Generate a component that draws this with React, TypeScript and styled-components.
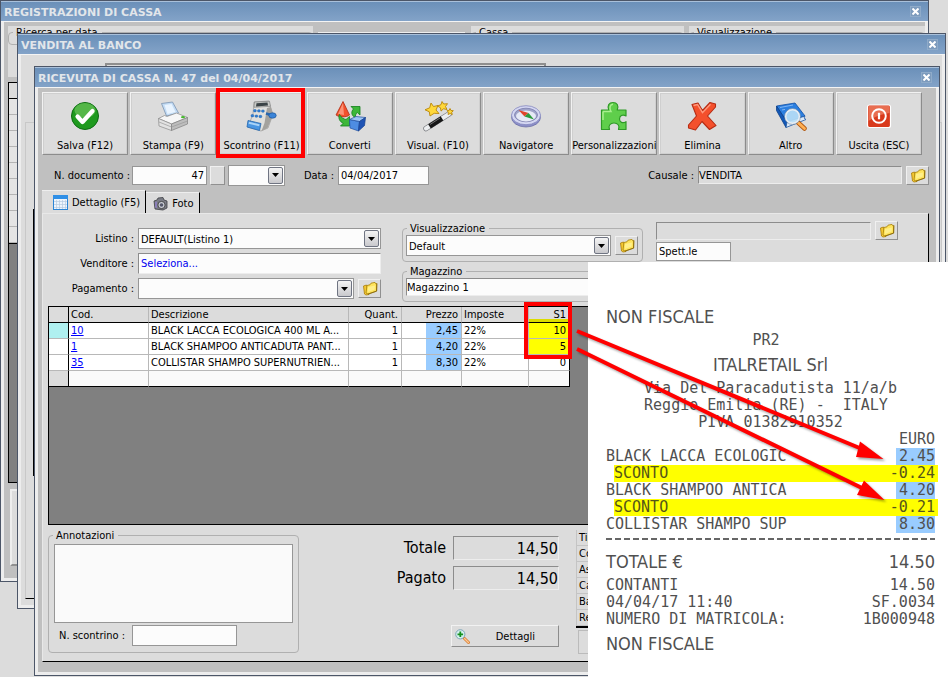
import React from "react";
import styled, { createGlobalStyle, css } from "styled-components";

const face = "#dcdcdc";
const shade = "#c0c0c0";
const ui = `"DejaVu Sans Condensed", Tahoma, "Noto Sans", sans-serif`;
const mono = `"DejaVu Sans Mono", "Liberation Mono", monospace`;

const Global = createGlobalStyle`
  *, *::before, *::after { box-sizing: border-box; }
  body { margin: 0; background: ${face}; font: 11px/13px ${ui}; color: #000; }
  button, input, select, textarea { font: inherit; color: inherit; margin: 0; border-radius: 0; outline: none; }
`;

const Desktop = styled.div`
  position: relative;
  height: 100vh;
  overflow: hidden;
`;

const Window = styled.section<{ $l: number; $t: number; $r: number; $b: number }>`
  position: absolute;
  left: ${(p) => p.$l}px;
  top: ${(p) => p.$t}px;
  right: ${(p) => p.$r}px;
  bottom: ${(p) => p.$b}px;
  display: flex;
  flex-direction: column;
  border: 1px solid #4c5668;
`;

const TitleBar = styled.header`
  display: flex;
  align-items: center;
  justify-content: space-between;
  flex: none;
  height: 21px;
  padding: 0 7px 0 3px;
  background: linear-gradient(#6b90b9, #83a3c8);
  border-top: 1px solid #a9c0da;
  border-bottom: 1px solid #f4f4f4;
`;

const Title = styled.h1`
  margin: 0;
  padding-top: 3px;
  font-family: "DejaVu Sans", Verdana, sans-serif;
  font-size: 11px;
  line-height: 16px;
  font-weight: bold;
  color: #e2e6ea;
  white-space: nowrap;
`;

const Close = styled.button`
  display: flex;
  align-items: center;
  justify-content: center;
  width: 11px;
  height: 11px;
  padding: 0;
  background: #7d9bbd;
  border: 1px solid #8fabc9;
`;

const Body = styled.div<{ $bg: string }>`
  flex: 1;
  min-height: 0;
  display: flex;
  flex-direction: column;
  background: ${(p) => p.$bg};
  border: 3px solid #ededed;
  border-top: 0;
  overflow: hidden;
`;

/* ---- back windows ---- */
const FilterRow = styled.div`
  display: grid;
  grid-template-columns: 305px 148px 213px 1fr;
  gap: 5px;
  padding: 4px 0 0 4px;
`;

const FilterPanel = styled.div`
  height: 51px;
  background: ${face};
`;

const BlankButton = styled.button`
  height: 44px;
  margin-top: 6px;
  background: ${face};
  border: 1px solid #eee;
  border-right-color: #909090;
  border-bottom-color: #909090;
`;

const BackGrid = styled.div`
  flex: 1;
  margin: 5px 0 6px 4px;
  border: 1px solid #000;
  background: #808080;
`;

const BackHead = styled.div`
  height: 16px;
  background: ${face};
  border-bottom: 1px solid #000;
`;

const BackRows = styled.div`
  height: 145px;
  border-bottom: 1px solid #000;
  background: repeating-linear-gradient(#e4e4e4 0 15px, #b4b4b4 15px 16px);
`;

const BackFooter = styled.div`
  height: 77px;
  margin: 0 4px 12px 6px;
  background: ${face};
  border: 2px solid #eee;
  border-bottom-color: #909090;
`;

const BackField = styled.div`
  width: 441px;
  height: 30px;
  margin: 8px 0 0 84px;
  border: 2px solid #8e8e8e;
`;

const BackPanel = styled.div`
  flex: 1;
  margin: 29px 0 6px 4px;
  padding: 86px 1px 122px 7px;
  border: 1px solid #c8c8c8;
  border-bottom-color: #000;
`;

const BackInner = styled.div`
  height: 100%;
  border: 1px solid #000;
`;

/* ---- toolbar ---- */
const Main = styled(Body)`
  padding: 4px 7px 10px 4px;
`;

const Toolbar = styled.nav`
  display: grid;
  grid-template-columns: repeat(10, 1fr);
  gap: 2px;
  flex: none;
  padding-right: 7px;
`;

const Tool = styled.button<{ $marked?: boolean }>`
  position: relative;
  display: flex;
  flex-direction: column;
  align-items: center;
  min-width: 0;
  height: 63px;
  padding: 7px 0 0;
  background: ${face};
  border: 1px solid;
  border-color: #f2f2f2 #8c8c8c #8c8c8c #f2f2f2;
  box-shadow: inset 1px 1px #cfcfcf, inset -1px -1px #cfcfcf;
  white-space: nowrap;
  ${(p) =>
    p.$marked &&
    css`
      &::after {
        content: "";
        position: absolute;
        inset: -5px -1px -4px -3px;
        border: 4px solid #f00;
      }
    `}
  svg { flex: none; width: 32px; height: 32px; }
`;

const ToolLabel = styled.span`
  display: flex;
  justify-content: center;
  width: 100%;
  margin-top: 7px;
  overflow: hidden;
`;

/* ---- form parts ---- */
const DocRow = styled.div`
  display: flex;
  align-items: center;
  flex: none;
  margin-top: 10px;
  padding-left: 12px;
  height: 20px;
`;

const Label = styled.label<{ $w: number; $right?: boolean }>`
  flex: none;
  width: ${(p) => p.$w}px;
  padding-right: 4px;
  text-align: ${(p) => (p.$right ? "right" : "left")};
  white-space: nowrap;
`;

const Field = styled.input<{ $w?: number; $sunken?: boolean; $right?: boolean }>`
  ${(p) => (p.$w ? `width: ${p.$w}px; flex: none;` : "flex: 1; min-width: 0; width: 100%;")}
  height: ${(p) => (p.$sunken ? 18 : 19)}px;
  padding: 0 2px;
  background: ${(p) => (p.$sunken ? face : "#fcfcfc")};
  border: 1px solid #969696;
  text-align: ${(p) => (p.$right ? "right" : "left")};
  ${(p) => p.$sunken && "border-color: #8c8c8c #ededed #ededed #8c8c8c; padding: 0;"}
`;

const SellerField = styled(Field)`
  height: 21px;
  border-color: #8c8c8c #ededed #ededed #8c8c8c;
  color: #0000f0;
`;

const StoreField = styled(Field)`
  height: 18px;
  padding: 0;
  border-color: #8c8c8c #ededed #ededed #8c8c8c;
`;

const SlipField = styled(Field)`
  height: 21px;
`;

const SmallButton = styled.button`
  flex: none;
  width: 15px;
  height: 19px;
  margin: 0 3px;
  padding: 0;
  background: ${face};
  border: 1px solid;
  border-color: #f0f0f0 #909090 #909090 #f0f0f0;
`;

const FolderButton = styled(SmallButton)`
  display: flex;
  align-items: center;
  justify-content: center;
  width: 23px;
  margin: 0 0 0 4px;
`;

const SelectWrap = styled.span<{ $w?: number }>`
  position: relative;
  display: flex;
  ${(p) => (p.$w ? `width: ${p.$w}px; flex: none;` : "flex: 1; min-width: 0;")}
`;

const NativeSelect = styled.select`
  appearance: none;
  width: 100%;
  height: 21px;
  padding: 1px 18px 0 2px;
  background: #fcfcfc;
  border: 1px solid #969696;
`;

const Arrow = styled.span`
  position: absolute;
  right: 2px;
  top: 2px;
  bottom: 2px;
  display: flex;
  align-items: center;
  justify-content: center;
  width: 15px;
  border: 1px solid #6f7482;
  border-radius: 2px;
  background: linear-gradient(#f4f4f4, #c9c9cd);
  pointer-events: none;
`;

const Tabs = styled.div`
  display: flex;
  align-items: flex-end;
  flex: none;
  height: 23px;
  margin-top: 5px;
`;

const Tab = styled.button<{ $on?: boolean }>`
  display: flex;
  align-items: center;
  gap: 4px;
  height: ${(p) => (p.$on ? 23 : 21)}px;
  padding: 1px 5px 0 ${(p) => (p.$on ? 11 : 7)}px;
  background: ${face};
  border: 0;
  border-top: 1px solid #eee;
  border-right: 1px solid #000;
`;

const Panel = styled.div`
  flex: 1;
  min-height: 0;
  display: flex;
  flex-direction: column;
  padding: 0 5px;
  background: ${face};
  border: 1px solid #e8e8e8;
  border-right-color: #000;
  border-bottom-color: #000;
`;

const FormArea = styled.div`
  display: grid;
  grid-template-columns: 333px 241px 1fr;
  gap: 0 21px;
  flex: none;
  height: 92px;
  padding-top: 7px;
`;

const LeftColumn = styled.div`
  display: flex;
  flex-direction: column;
  gap: 4px;
  padding-top: 7px;
`;

const Line = styled.div`
  display: flex;
  align-items: center;
`;

const MidColumn = styled.div`
  display: flex;
  flex-direction: column;
  gap: 3px;
  padding-top: 1px;
`;

const RightColumn = styled.div`
  display: flex;
  flex-direction: column;
  gap: 2px;
  margin-left: -8px;
  padding-right: 25px;
`;

const Group = styled.fieldset`
  min-width: 0;
  margin: 0;
  padding: 0 4px 5px 3px;
  border: 1px solid #b0b0b0;
  border-radius: 4px;
`;

const Legend = styled.legend`
  margin-left: 1px;
  padding: 0 4px 0 3px;
  line-height: 13px;
`;

/* ---- article grid ---- */
const GridArea = styled.div`
  flex: 1;
  min-height: 0;
  border: 1px solid #000;
  background: #808080;
`;

const Table = styled.table`
  width: 521px;
  table-layout: fixed;
  border-collapse: separate;
  border-spacing: 0;
  tr:last-child td { border-bottom-color: #000; background: #fafafa; }
  tr:last-child td:first-child { background: ${face}; }
`;

const cell = css<{ $right?: boolean; $edge?: boolean }>`
  height: 16px;
  padding: 1px 3px 0 2px;
  line-height: 14px;
  font-weight: normal;
  text-align: ${(p) => (p.$right ? "right" : "left")};
  white-space: nowrap;
  overflow: hidden;
  text-overflow: ellipsis;
  border-right: 1px solid ${(p) => (p.$edge ? "#000" : "#b8b8b8")};
`;

const Th = styled.th<{ $right?: boolean; $edge?: boolean }>`
  ${cell}
  background: ${face};
  border-bottom: 1px solid #000;
`;

const MarkedTh = styled(Th)`
  position: relative;
  overflow: visible;
  background: linear-gradient(${face} 12px, #dcdc00 12px);
  &::after {
    content: "";
    position: absolute;
    left: -5px;
    top: -5px;
    right: -3px;
    height: 57px;
    border: 4px solid #f00;
  }
`;

const tones = {
  plain: "#fff",
  current: "#aff0f0",
  price: "linear-gradient(to right, #fff 24px, #99ccff 24px)",
  discount: "#ff0",
};

const Td = styled.td<{ $right?: boolean; $edge?: boolean; $tone?: keyof typeof tones }>`
  ${cell}
  background: ${(p) => tones[p.$tone ?? "plain"]};
  border-bottom: 1px solid #b8b8b8;
  a { color: #00f; }
`;

/* ---- bottom area ---- */
const Bottom = styled.div`
  display: flex;
  flex: none;
  height: 136px;
  padding: 4px 0 8px;
`;

const NotesGroup = styled(Group)`
  width: 251px;
  padding: 2px 5px 7px;
`;

const NotesLegend = styled(Legend)`
  margin-left: -1px;
`;

const Notes = styled.textarea`
  display: block;
  width: 100%;
  height: 79px;
  resize: none;
  background: #fafafa;
  border: 1px solid #969696;
`;

const NoteLine = styled(Line)`
  margin-top: 2px;
  padding-left: 5px;
`;

const Totals = styled.div`
  display: flex;
  flex-direction: column;
  gap: 6px;
  width: 260px;
  padding-top: 7px;
`;

const TotalLabel = styled.label`
  width: 147px;
  margin-right: 7px;
  text-align: right;
  font-size: 16px;
  line-height: 24px;
`;

const TotalField = styled(Field)`
  height: 24px;
  font-size: 16px;
`;

const DetailsButton = styled.button`
  display: flex;
  align-items: center;
  width: 108px;
  height: 22px;
  margin: 29px 0 0 152px;
  padding: 0 23px 0 3px;
  background: ${face};
  border: 1px solid;
  border-color: #f2f2f2 #8c8c8c #8c8c8c #f2f2f2;
  span { flex: 1; text-align: right; }
`;

const Payments = styled.div`
  flex: 1;
  margin-left: 17px;
  padding-top: 1px;
`;

const PaymentList = styled.ul`
  margin: 0;
  padding: 0;
  list-style: none;
  border-bottom: 2px solid #000;
  li { height: 16px; padding-left: 2px; line-height: 15px; border-bottom: 1px solid #c4c4c4; border-left: 1px solid #c4c4c4; }
`;

const PaymentBox = styled.div`
  height: 24px;
  margin: 2px 0 0 2px;
  border: 1px solid #bbb;
`;

/* ---- receipt ---- */
const Receipt = styled.article`
  position: absolute;
  left: 588px;
  top: 262px;
  right: 0;
  bottom: 0;
  padding: 39px 13px 0 18px;
  background: #fff;
  color: #505050;
  font-family: ${mono};
  font-size: 15px;
  line-height: 17px;
  white-space: pre;
`;

const Slip = styled.div`
  display: flex;
  justify-content: space-between;
`;

const Centered = styled(Slip)`
  justify-content: center;
`;

const Tall = styled(Slip)`
  font-family: ${ui};
  font-size: 18px;
  line-height: 31px;
`;

const TallCentered = styled(Tall)`
  justify-content: center;
`;

const Discount = styled(Slip)`
  margin: 0 -3px 0 8px;
  padding-right: 3px;
  background: #ff0;
  color: #55551a;
`;

const Amount = styled.span`
  padding-left: 3px;
  background: #99ccff;
`;

const Rule = styled.hr`
  height: 2px;
  margin: 5px 0 6px;
  border: 0;
  background: repeating-linear-gradient(to right, #666 0 6px, transparent 6px 9px);
`;

const Arrows = styled.svg`
  position: absolute;
  left: 570px;
  top: 320px;
  width: 330px;
  height: 200px;
  pointer-events: none;
  filter: drop-shadow(2px 2px 1px rgba(0, 0, 0, 0.35));
`;

const CloseX = () => (
  <svg width="7" height="7" viewBox="0 0 7 7"><path d="M.5.5l6 6M6.5.5l-6 6" stroke="#fff" strokeWidth="2" /></svg>
);

const Folder = () => (
  <svg width="16" height="15" viewBox="0 0 16 15">
    <path d="M1.500 5l3-1 1 7 1.500 2.500-3 .5-1.500-1z" fill="#f5c832" stroke="#a87c08" strokeWidth=".8" />
    <path d="M5 4.500l3-.7 1-1.600 4-.8.600 1.300 1.200-.2-.2 7.500-8.600 3L4 12z" fill="#ffe45c" stroke="#b08a10" strokeWidth=".9" />
    <path d="M6 6l7-1.500-.3 4L6 11z" fill="#fff3a0" opacity=".7" />
    <path d="M14.800 2.500l-.2 7.700-8.600 3" fill="none" stroke="#7a5a00" strokeWidth=".7" />
  </svg>
);

const Drop = ({ id, value, w, label }: { id?: string; value?: string; w?: number; label?: string }) => (
  <SelectWrap $w={w}>
    <NativeSelect id={id} aria-label={label}><option>{value ?? ""}</option></NativeSelect>
    <Arrow><svg width="7" height="4" viewBox="0 0 7 4"><path d="M0 0h7L3.500 4z" fill="#000" /></svg></Arrow>
  </SelectWrap>
);

const icons: Record<string, React.ReactNode> = {
  save: (
    <>
      <circle cx="16" cy="16" r="13.500" fill="#1f9a1f" stroke="#0d6b12" />
      <ellipse cx="16" cy="10.500" rx="10.500" ry="7.500" fill="#7fd06a" opacity=".55" />
      <path d="M8.500 16.500l5 5.500L23.500 11" fill="none" stroke="#fff" strokeWidth="4.200" strokeLinecap="round" strokeLinejoin="round" />
    </>
  ),
  print: (
    <>
      <path d="M4.500 3.500l11-1.500 6 11-12 3z" fill="#c3dcf5" stroke="#7a93b0" strokeWidth=".8" />
      <path d="M7.500 5l7-1 4 8-8 2z" fill="#e9f4ff" />
      <path d="M1.500 18.500l6-3 2.500 1 9.500-3.500 11 4.500-16 6.500z" fill="#f6f6f6" stroke="#8a8a8a" strokeWidth=".7" />
      <path d="M1.500 18.500l13 5.500v6.500L2 26z" fill="#e2e2e2" stroke="#8a8a8a" strokeWidth=".7" />
      <path d="M14.500 24l16-6.500V24l-16 6.500z" fill="#bdbdbd" stroke="#808080" strokeWidth=".7" />
      <path d="M2 22l12.500 5 16-6" fill="none" stroke="#9a9a9a" strokeWidth=".7" />
      <ellipse cx="26" cy="17.200" rx="2" ry="1.100" fill="#45b92b" />
    </>
  ),
  register: (
    <>
      <path d="M9 2l15-1 1 5 3 8-5 14-7 3-13-4 5-13z" fill="#e0e0dd" stroke="#999" strokeWidth=".7" />
      <path d="M9.500 2l15-.7 1 5-16.500 1z" fill="#c9cbc8" stroke="#777" strokeWidth=".6" />
      <path d="M11.500 3.200l11-.6.500 3-12 .8z" fill="#3b4346" />
      <path d="M22 8l4-1 2 8-5.500 13-6 3 3-8z" fill="#a3a29e" />
      <g fill="#2f7fd6" stroke="#155aa8" strokeWidth=".4">
        <rect x="8.500" y="9.500" width="2.800" height="2.400" rx="1" /><rect x="12.500" y="9.700" width="2.800" height="2.400" rx="1" /><rect x="16.500" y="9.900" width="2.800" height="2.400" rx="1" />
        <rect x="6" y="14.500" width="2.800" height="2.400" rx="1" /><rect x="10" y="14.900" width="2.800" height="2.400" rx="1" /><rect x="14" y="15.300" width="2.800" height="2.400" rx="1" />
      </g>
      <path d="M3 20.500l13 3-1.500 7-12.500-3.500z" fill="#4a96e2" stroke="#2366ad" strokeWidth=".8" />
      <path d="M4 21.800l10.500 2.500-.4 2-10.500-2.500z" fill="#a9d3f7" />
      <path d="M21 13.500l5 1.500" stroke="#2a67ad" strokeWidth="2.500" />
      <ellipse cx="27.500" cy="15.500" rx="3.700" ry="2.700" fill="#3b84d8" stroke="#1d5499" strokeWidth=".7" />
    </>
  ),
  convert: (
    <>
      <path d="M9 1.500l6.500 13.500c-3 2.500-10 2.500-13.500 0z" fill="#f2512c" stroke="#b02910" strokeWidth=".8" />
      <path d="M9 3l1 12-6-1z" fill="#ffae96" opacity=".7" />
      <path d="M17 6.500h9v8.500l-2.700-2.500c-1.500 1-2 3-2 5.300-4-2.500-4.500-6-1.800-8.800z" fill="#3db739" stroke="#12801a" strokeWidth=".8" />
      <path d="M15.500 26H6.500l2.700-2.700C5.500 21.500 4 18 5.500 14.500c1.500 3 4 4.500 6.500 5l3.500-3z" fill="#3db739" stroke="#12801a" strokeWidth=".8" />
      <path d="M15.500 19.500l10 2L24.500 31l-8.500-3z" fill="#4e8de2" stroke="#214f9e" strokeWidth=".7" />
      <path d="M15.500 19.500l6.500-3 9.500 1-6 4z" fill="#9cc4f4" stroke="#214f9e" strokeWidth=".7" />
      <path d="M25.500 21.500l6-4-1 8-6 5.500z" fill="#1f53b4" stroke="#163f8c" strokeWidth=".7" />
    </>
  ),
  wand: (
    <>
      <path d="M4 28.500L27 14" stroke="#77797d" strokeWidth="5.500" strokeLinecap="round" />
      <path d="M4 28.500L27 14" stroke="#eceef0" strokeWidth="4.200" strokeLinecap="round" />
      <path d="M7.500 26.300L20 18.400" stroke="#161616" strokeWidth="5" />
      <path d="M8 24.500L18 18" stroke="#777" strokeWidth="1" />
      <g fill="#ffd83a" stroke="#b98607" strokeWidth=".9" strokeLinejoin="round">
        <path d="M9 3l2.500 3.500 4.500-1-2 4.500 3 3.500-4.800-.2L8 16l-.7-4.200L3 9.800l4.700-2z" />
        <path d="M20 1.500l1.700 2.500 3.800-.3-2 2.800 1.500 3-3.500-.7-2.500 2.300-.5-3.300-3-1.800 3.500-1.300z" />
        <path d="M28 8.500l1 2 2.300.2-1.600 1.600.6 2.200-2.200-1-2 1 .3-2.300-1.400-1.500 2.200-.4z" />
      </g>
    </>
  ),
  compass: (
    <>
      <ellipse cx="16" cy="17.200" rx="14.500" ry="9.800" fill="#8d90c8" stroke="#6668a4" strokeWidth=".7" />
      <ellipse cx="16" cy="15.200" rx="14.500" ry="9.500" fill="#d5d7f2" stroke="#8486bf" strokeWidth=".8" />
      <ellipse cx="16" cy="15" rx="11.500" ry="6.800" fill="#9fa3c9" stroke="#7a7cac" strokeWidth=".8" />
      <ellipse cx="16" cy="16" rx="10" ry="5.400" fill="#e6e9f6" />
      <path d="M8.500 10l10 3-4 3.500z" fill="#e0452b" /><path d="M24 19.500l-9.500-3 4-3.500z" fill="#2c9b3d" />
    </>
  ),
  puzzle: (
    <>
      <path d="M3.500 10h7.300C9 5.500 11 2.500 15 2.500s6 3 4.200 7.500H28v6c-3.500-2.200-6.500 0-6.500 3s3 5 6.500 2.700V29.500h-7.500c1.500-4-.8-6.500-4.500-6.500s-6 2.500-4.500 6.500h-8z" fill="#5fce4b" stroke="#2f9a27" strokeWidth="1.200" strokeLinejoin="round" />
      <path d="M5 11.500h8C11 8 12 4.500 15 4.300M5 11.500V20" fill="none" stroke="#a9f08f" strokeWidth="1.500" />
    </>
  ),
  cross: (
    <>
      <path d="M6 4.500L12 3l4.500 7.500L24 2.500l5.500 1.500v3L21.500 16l8.500 9.500-6.500 4-7.500-8-6.500 8.500L2.500 28v-3l8-9z" fill="#f4502c" stroke="#b52c14" strokeWidth="1.100" strokeLinejoin="round" />
      <path d="M7.500 5.500l4-1 5 8.200 8-8.500" fill="none" stroke="#ff9a7d" strokeWidth="1.400" />
    </>
  ),
  search: (
    <>
      <path d="M1.500 6L20 3l10 13-18 6z" fill="#2b7fe0" stroke="#0e4da3" strokeWidth=".8" />
      <path d="M1.500 6v4.500l9.500 17 1-5.500z" fill="#1258b8" stroke="#0d3f86" strokeWidth=".8" />
      <path d="M12 22l18-6-1 2 2 1.500-20 8z" fill="#dbe9f8" stroke="#1c57a5" strokeWidth=".8" />
      <path d="M5 7.500l13-2.500M7 10l3-.6" stroke="#7fb5f5" />
      <path d="M23 22.500l6.500 6" stroke="#b35a12" strokeWidth="4.500" strokeLinecap="round" />
      <path d="M23.500 23l6 5.500" stroke="#ffb054" strokeWidth="2.800" strokeLinecap="round" />
      <circle cx="17.500" cy="16.500" r="7" fill="#b9e0f7" fillOpacity=".9" stroke="#e8eef4" strokeWidth="1.800" />
      <circle cx="17.500" cy="16.500" r="8" fill="none" stroke="#6a87a5" strokeWidth=".6" />
    </>
  ),
  power: (
    <>
      <rect x="4.500" y="5" width="23" height="22.500" rx="2" fill="#d93a1c" stroke="#fff" strokeWidth="1.200" />
      <path d="M5.500 6h21v7q-11 1-21 8z" fill="#ee8468" opacity=".7" />
      <circle cx="16" cy="16" r="6.800" fill="none" stroke="#fff" strokeWidth="1.900" />
      <path d="M16 12.800v6.500" stroke="#fff" strokeWidth="2.200" />
    </>
  ),
};

const tools: [string, string][] = [
  ["save", "Salva (F12)"],
  ["print", "Stampa (F9)"],
  ["register", "Scontrino (F11)"],
  ["convert", "Converti"],
  ["wand", "Visual. (F10)"],
  ["compass", "Navigatore"],
  ["puzzle", "Personalizzazioni"],
  ["cross", "Elimina"],
  ["search", "Altro"],
  ["power", "Uscita (ESC)"],
];

const rows = [
  { cod: "10", text: "BLACK LACCA ECOLOGICA 400 ML A...", price: "2,45", s1: "10" },
  { cod: "1", text: "BLACK SHAMPOO ANTICADUTA PANT...", price: "4,20", s1: "5" },
  { cod: "35", text: "COLLISTAR SHAMPO SUPERNUTRIEN...", price: "8,30", s1: "0" },
];

const TableIcon = () => (
  <svg width="15" height="15" viewBox="0 0 15 15">
    <rect x=".5" y=".5" width="14" height="14" fill="#eef5fd" stroke="#2d86d6" />
    <rect x="0" y="0" width="15" height="4" fill="#2f8fe6" />
    <path d="M1 6.500h13M1 9.500h13M1 12.500h13M3.500 5v9M6.500 5v9M9.500 5v9M12.500 5v9" stroke="#b8cbe0" strokeWidth=".7" />
  </svg>
);

const CameraIcon = () => (
  <svg width="15" height="14" viewBox="0 0 15 14">
    <path d="M1 4l3-1 1-2 5-.5L11 3l3 1v7l-4 2-8-1z" fill="#7b7d86" stroke="#3c3d43" strokeWidth=".8" />
    <circle cx="8.500" cy="8" r="3.600" fill="#c9ccd4" stroke="#333" strokeWidth=".8" /><circle cx="8.500" cy="8" r="1.800" fill="#55586a" />
    <path d="M2 5l2-.5V11l-2-.5z" fill="#8a7fb8" />
  </svg>
);

const ZoomIcon = () => (
  <svg width="15" height="15" viewBox="0 0 15 15">
    <path d="M9 9l4.500 4.500" stroke="#d9813a" strokeWidth="3" strokeLinecap="round" />
    <path d="M9.500 9.500l4 4" stroke="#ffc890" strokeWidth="1.200" strokeLinecap="round" />
    <circle cx="5.300" cy="5.300" r="4.600" fill="#d4f0ee" stroke="#7fa5b8" />
    <path d="M5.300 2.500v5.600M2.500 5.300h5.600" stroke="#14901e" strokeWidth="1.800" />
  </svg>
);

const Frame = (p: { title: string }) => (
  <TitleBar>
    <Title>{p.title}</Title>
    <Close aria-label="Chiudi"><CloseX /></Close>
  </TitleBar>
);

export default function App() {
  return (
    <Desktop>
      <Global />
      <Window $l={0} $t={0} $r={19} $b={95}>
        <Frame title="REGISTRAZIONI DI CASSA" />
        <Body $bg={shade}>
          <FilterRow>
            <FilterPanel><Group><Legend>Ricerca per data</Legend></Group></FilterPanel>
            <BlankButton aria-label="Cerca" />
            <FilterPanel><Group><Legend>Cassa</Legend></Group></FilterPanel>
            <FilterPanel><Group><Legend>Visualizzazione</Legend></Group></FilterPanel>
          </FilterRow>
          <BackGrid><BackHead /><BackRows /></BackGrid>
          <BackFooter />
        </Body>
      </Window>

      <Window $l={17} $t={33} $r={2} $b={68}>
        <Frame title="VENDITA AL BANCO" />
        <Body $bg={face}>
          <BackField />
          <BackPanel><BackInner /></BackPanel>
        </Body>
      </Window>

      <Window $l={34} $t={66} $r={8} $b={1}>
        <Frame title="RICEVUTA DI CASSA N. 47 del 04/04/2017" />
        <Main $bg={shade}>
          <Toolbar>
            {tools.map(([icon, label]) => (
              <Tool key={icon} $marked={icon === "register"}>
                <svg viewBox="0 0 32 32">{icons[icon]}</svg>
                <ToolLabel>{label}</ToolLabel>
              </Tool>
            ))}
          </Toolbar>

          <DocRow>
            <Label htmlFor="num" $w={78}>N. documento :</Label>
            <Field id="num" $w={75} $right defaultValue="47" />
            <SmallButton aria-label="Numero" />
            <Drop w={57} label="Serie" />
            <Label htmlFor="date" $w={53} $right>Data :</Label>
            <Field id="date" $w={91} defaultValue="04/04/2017" />
            <Label htmlFor="reason" $w={269} $right>Causale :</Label>
            <Field id="reason" $sunken readOnly defaultValue="VENDITA" />
            <FolderButton aria-label="Apri causale"><Folder /></FolderButton>
          </DocRow>

          <Tabs role="tablist">
            <Tab role="tab" aria-selected $on><TableIcon />Dettaglio (F5)</Tab>
            <Tab role="tab"><CameraIcon />Foto</Tab>
          </Tabs>

          <Panel>
            <FormArea>
              <LeftColumn>
                <Line>
                  <Label htmlFor="list" $w={90} $right>Listino :</Label>
                  <Drop id="list" value="DEFAULT(Listino 1)" />
                </Line>
                <Line>
                  <Label htmlFor="seller" $w={90} $right>Venditore :</Label>
                  <SellerField id="seller" defaultValue="Seleziona..." />
                </Line>
                <Line>
                  <Label htmlFor="pay" $w={90} $right>Pagamento :</Label>
                  <Drop id="pay" />
                  <FolderButton aria-label="Apri pagamento"><Folder /></FolderButton>
                </Line>
              </LeftColumn>
              <MidColumn>
                <Group>
                  <Legend>Visualizzazione</Legend>
                  <Line>
                    <Drop value="Default" label="Visualizzazione" />
                    <FolderButton aria-label="Apri visualizzazione"><Folder /></FolderButton>
                  </Line>
                </Group>
                <Group>
                  <Legend>Magazzino</Legend>
                  <Line><StoreField aria-label="Magazzino" defaultValue="Magazzino 1" /></Line>
                </Group>
              </MidColumn>
              <RightColumn>
                <Line>
                  <Field $sunken readOnly aria-label="Cliente" />
                  <FolderButton aria-label="Apri cliente"><Folder /></FolderButton>
                </Line>
                <Line><Field $w={75} aria-label="Titolo" defaultValue="Spett.le" /></Line>
              </RightColumn>
            </FormArea>

            <GridArea>
              <Table>
                <colgroup>
                  <col width="20" /><col width="80" /><col width="200" /><col width="53" /><col width="60" /><col width="67" /><col width="41" />
                </colgroup>
                <thead>
                  <tr>
                    <Th $edge /><Th>Cod.</Th><Th>Descrizione</Th><Th $right>Quant.</Th><Th $right>Prezzo</Th><Th>Imposte</Th>
                    <MarkedTh $right $edge>S1</MarkedTh>
                  </tr>
                </thead>
                <tbody>
                  {rows.map((r, i) => (
                    <tr key={r.cod}>
                      <Td $edge $tone={i === 0 ? "current" : "plain"} />
                      <Td><a href="#articolo">{r.cod}</a></Td>
                      <Td>{r.text}</Td>
                      <Td $right>1</Td>
                      <Td $right $tone="price">{r.price}</Td>
                      <Td>22%</Td>
                      <Td $right $edge $tone={i < 2 ? "discount" : "plain"}>{r.s1}</Td>
                    </tr>
                  ))}
                  <tr><Td $edge /><Td /><Td /><Td /><Td /><Td /><Td $edge /></tr>
                </tbody>
              </Table>
            </GridArea>

            <Bottom>
              <NotesGroup>
                <NotesLegend>Annotazioni</NotesLegend>
                <Notes aria-label="Annotazioni" />
                <NoteLine>
                  <Label htmlFor="slip" $w={73}>N. scontrino :</Label>
                  <SlipField id="slip" $w={105} />
                </NoteLine>
              </NotesGroup>
              <Totals>
                <Line>
                  <TotalLabel htmlFor="total">Totale</TotalLabel>
                  <TotalField id="total" $sunken $right readOnly defaultValue="14,50" />
                </Line>
                <Line>
                  <TotalLabel htmlFor="paid">Pagato</TotalLabel>
                  <TotalField id="paid" $sunken $right readOnly defaultValue="14,50" />
                </Line>
                <DetailsButton><ZoomIcon /><span>Dettagli</span></DetailsButton>
              </Totals>
              <Payments>
                <PaymentList>
                  <li>Tip</li><li>Co</li><li>As</li><li>Ca</li><li>Ba</li><li>Re</li>
                </PaymentList>
                <PaymentBox />
              </Payments>
            </Bottom>
          </Panel>
        </Main>
      </Window>

      <Receipt>
        <Tall>NON FISCALE</Tall>
        <Centered>{"PR2 "}</Centered>
        <TallCentered>ITALRETAIL Srl</TallCentered>
        <Centered>Via Del Paracadutista 11/a/b</Centered>
        <Centered>{"Reggio Emilia (RE) -  ITALY "}</Centered>
        <Centered>PIVA 01382910352</Centered>
        <Slip><span /><span>EURO</span></Slip>
        <Slip><span>BLACK LACCA ECOLOGIC</span><Amount>2.45</Amount></Slip>
        <Discount><span>SCONTO</span><span>-0.24</span></Discount>
        <Slip><span>BLACK SHAMPOO ANTICA</span><Amount>4.20</Amount></Slip>
        <Discount><span>SCONTO</span><span>-0.21</span></Discount>
        <Slip><span>COLLISTAR SHAMPO SUP</span><Amount>8.30</Amount></Slip>
        <Rule />
        <Tall><span>TOTALE €</span><span>14.50</span></Tall>
        <Slip><span>CONTANTI</span><span>14.50</span></Slip>
        <Slip><span>04/04/17 11:40</span><span>SF.0034</span></Slip>
        <Slip><span>NUMERO DI MATRICOLA:</span><span>1B000948</span></Slip>
        <Tall>NON FISCALE</Tall>
      </Receipt>

      <Arrows viewBox="570 320 330 200">
        <path d="M577 331L862 449M577 349L864 489" stroke="#f00" strokeWidth="4" />
        <path d="M860 441.500L856 457l27.500 2z M864 480.500L857 495l27.500 5z" fill="#f00" />
      </Arrows>
    </Desktop>
  );
}
